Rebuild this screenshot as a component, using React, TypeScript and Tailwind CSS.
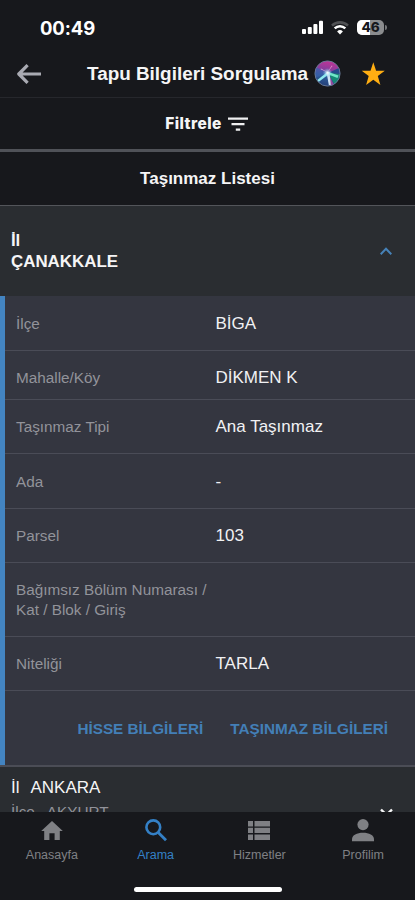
import type { ReactNode } from 'react'

interface DetailRow {
  label:  string
  value:  string
  height: string
}

const rows: DetailRow[] = [
  { label: 'İlçe',         value: 'BİGA',         height: 'h-[55px] pt-px' },
  { label: 'Mahalle/Köy',  value: 'DİKMEN K',     height: 'h-[49px] pt-[6px]' },
  { label: 'Taşınmaz Tipi', value: 'Ana Taşınmaz', height: 'h-[54px] pt-px' },
  { label: 'Ada',          value: '-',            height: 'h-[55px] pt-px' },
  { label: 'Parsel',       value: '103',          height: 'h-[54px] pt-px' },
  { label: 'Bağımsız Bölüm Numarası / Kat / Blok / Giriş', value: '', height: 'h-[74px]' },
  { label: 'Niteliği',     value: 'TARLA',        height: 'h-[54px]' },
]

function StatusBar() {
  return (
    <div className="h-[50px] shrink-0 flex items-start justify-between pl-10 pr-[28px] pt-[16px]">
      <span className="font-['Inter',sans-serif] font-bold text-[18.5px] leading-6 tracking-[-0.1px] text-white">00:49</span>
      <div className="flex items-center mt-[4px]">
        <svg width="22" height="15" viewBox="0 0 22 15" fill="#fff">
          <rect x="0" y="9" width="4" height="5" rx="1" />
          <rect x="5.8" y="7" width="4" height="7" rx="1" />
          <rect x="11.4" y="4" width="4" height="10" rx="1" />
          <rect x="17" y="0.8" width="4" height="13.2" rx="1" />
        </svg>
        <svg className="ml-[7px]" width="18" height="14" viewBox="0 0 18 14" fill="none">
          <path d="M1 4.6a11.5 11.5 0 0 1 16 0" stroke="#505154" strokeWidth="2.6" />
          <path d="M3.7 7.4a7.6 7.6 0 0 1 10.6 0" stroke="#fff" strokeWidth="2.5" />
          <path d="M9 13.6 6.1 10.5a4.1 4.1 0 0 1 5.8 0Z" fill="#fff" />
        </svg>
        <div className="relative ml-[8px] w-[27px] h-[15px] rounded-[5px] overflow-hidden bg-[#8b8c8e] flex items-center justify-center">
          <div className="absolute inset-y-0 left-0 w-[13px] bg-white" />
          <span className="relative font-['Inter',sans-serif] font-extrabold text-[13.5px] leading-none text-[#17181c]">46</span>
        </div>
        <div className="ml-px w-[2px] h-[5px] rounded-r-full bg-[#77787a]" />
      </div>
    </div>
  )
}

function AssistantOrb() {
  return (
    <svg width="27" height="27" viewBox="0 0 27 27">
      <defs>
        <linearGradient id="orb" x1="0.6" y1="0" x2="0.4" y2="1">
          <stop offset="0" stopColor="#c23496" />
          <stop offset="0.35" stopColor="#8a3c9c" />
          <stop offset="0.6" stopColor="#2f5f9c" />
          <stop offset="1" stopColor="#233f78" />
        </linearGradient>
        <radialGradient id="glow">
          <stop offset="0" stopColor="#fff" />
          <stop offset="0.3" stopColor="#d3eefa" stopOpacity="0.7" />
          <stop offset="1" stopColor="#63c8e8" stopOpacity="0" />
        </radialGradient>
        <clipPath id="orbClip"><circle cx="13.5" cy="13.5" r="12.3" /></clipPath>
      </defs>
      <circle cx="13.5" cy="13.5" r="12.5" fill="url(#orb)" />
      <g clipPath="url(#orbClip)">
        <path d="M13.5 13 0 6v12Z" fill="#3a5fae" opacity="0.7" />
        <path d="M14 13 27 12v9l-6 4Z" fill="#12906f" opacity="0.85" />
        <path d="M14 13 26 7.5 27 14Z" fill="#264a8c" />
        <path d="M14 13 17 27h4Z" fill="#a14a9d" opacity="0.9" />
        <path d="M14 11.5 3 20.3l1.6 1.6L15 14Z" fill="#8feaf0" />
        <path d="M13 11.5 24.5 15.5l-1 2.5L13 14Z" fill="#6fe6c8" />
        <path d="M12.5 12 14.8 25h2L15.5 12Z" fill="#cfe3f5" />
        <path d="M14 12.5 7 8.5l-.4.8Z" fill="#d9aee5" />
        <path d="M13 13 18.5 6l-.8-.5Z" fill="#e58bc4" />
      </g>
      <circle cx="13.5" cy="12.8" r="4.8" fill="url(#glow)" />
      <circle cx="13.5" cy="13.5" r="12.6" fill="none" stroke="#6d80a0" strokeWidth="0.9" />
    </svg>
  )
}

function Header() {
  return (
    <div className="h-[48px] shrink-0 flex items-center border-b border-[#26272c]">
      <svg className="ml-[17px] shrink-0" width="24" height="20" viewBox="0 0 24 20" fill="none" stroke="#a9aab2" strokeWidth="3.2" strokeLinejoin="round">
        <path d="M10.6 1.2 1.8 10l8.8 8.8M2 10h22" />
      </svg>
      <h1 className="ml-[46px] w-[221px] shrink-0 whitespace-nowrap text-[18.9px] leading-6 font-bold text-[#f5f5f6]">
        Tapu Bilgileri Sorgulama
      </h1>
      <div className="ml-[6px] shrink-0"><AssistantOrb /></div>
      <svg className="ml-[20px] shrink-0" width="25" height="24" viewBox="0 0 25 24" fill="#ffae12">
        <path d="m12.3.3 2.8 8.4h8.7l-7 5.3 2.6 9-7.1-5.3L5.1 23l2.6-9-7-5.3h8.8Z" />
      </svg>
    </div>
  )
}

function Row({ label, value, height }: DetailRow) {
  return (
    <div className={`${height} flex items-center border-b border-[#4a4c57]`}>
      <span className="ml-[11px] w-[199.5px] shrink-0 text-[15.3px] leading-5 text-[#92939a]">{label}</span>
      <span className="text-[17px] leading-5 text-[#f1f1f3]">{value}</span>
    </div>
  )
}

function NavItem({ label, active, children }: { label: string; active?: boolean; children: ReactNode }) {
  return (
    <div className={`flex flex-col items-center ${active ? 'text-[#3480c6]' : 'text-[#7f8084]'}`}>
      <svg width="24" height="24" viewBox="0 0 24 24" fill="currentColor">{children}</svg>
      <span className="mt-[4px] text-[12.5px] leading-4">{label}</span>
    </div>
  )
}

export default function App() {
  return (
    <div className="w-[415px] h-[900px] overflow-hidden flex flex-col bg-[#17181c] font-['Liberation_Sans',Arial,sans-serif]">
      <StatusBar />
      <Header />

      {/* Filter */}
      <div className="h-[54px] shrink-0 flex items-center justify-center gap-[6px] pr-[2px] pt-px border-b-[3px] border-[#505258]">
        <span className="font-['Inter',sans-serif] text-[15.5px] leading-5 tracking-[0.4px] font-extrabold text-[#f5f5f6]">Filtrele</span>
        <svg width="20" height="14" viewBox="0 0 20 14" fill="#f0f0f1">
          <path d="M0 .5h20v2.3H0zM3.5 6h13v2.3h-13zM7.8 11.5h4.4v2.3H7.8z" />
        </svg>
      </div>

      <div className="h-[54px] shrink-0 flex items-center justify-center border-b border-[#53555a]">
        <h2 className="text-[17px] leading-5 font-bold text-[#f5f5f6]">Taşınmaz Listesi</h2>
      </div>

      {/* Expanded property */}
      <div className="h-[90px] shrink-0 flex items-center justify-between pl-[11px] pr-[23px] bg-[#2a2d31]">
        <div className="text-[16.9px] leading-[21px] font-bold text-[#f5f5f6]">
          <div className="tracking-[-0.3px]">İl</div>
          <div>ÇANAKKALE</div>
        </div>
        <svg width="12" height="8" viewBox="0 0 12 8" fill="none" stroke="#4682b8" strokeWidth="2">
          <path d="m.7 7.2 5.3-5.5 5.3 5.5" />
        </svg>
      </div>

      <div className="h-[471px] shrink-0 flex flex-col border-b-2 border-[#4b4d56] bg-[#343640]">
        <div className="flex-1 border-l-[5px] border-[#4384c1]">
          {rows.map(r => <Row key={r.label} {...r} />)}
          <div className="h-[74px] pt-px flex items-center justify-end gap-[27px] pr-[27px] text-[15.3px] leading-5 font-bold text-[#437fb7]">
            <button>HİSSE BİLGİLERİ</button>
            <button>TAŞINMAZ BİLGİLERİ</button>
          </div>
        </div>
      </div>

      {/* Next property, cut off by the tab bar */}
      <div className="h-[45px] shrink-0 overflow-hidden flex justify-between pl-[11px] pr-[22px] pt-[10px] bg-[#2a2d31]">
        <div>
          <div className="flex gap-[11px] text-[17px] leading-[21px] text-[#f5f5f6]"><span>İl</span><span>ANKARA</span></div>
          <div className="mt-[3px] flex gap-[12px] text-[15.3px] leading-[21px] text-[#92939a]"><span>İlçe</span><span>AKYURT</span></div>
        </div>
        <svg className="mt-[31px] shrink-0" width="13" height="9" viewBox="0 0 13 9" fill="none" stroke="#f5f5f6" strokeWidth="2.4">
          <path d="m1 1.5 5.5 5.5L12 1.5" />
        </svg>
      </div>

      {/* Tab bar */}
      <div className="flex-1 flex flex-col justify-between items-center pt-[7px] pb-[8px]">
        <div className="w-full grid grid-cols-4">
          <NavItem label="Anasayfa">
            <path d="M12 2 1.2 12h3v9h5.2v-6.7h5.2V21h5.2v-9h3Z" />
          </NavItem>
          <NavItem label="Arama" active>
            <circle cx="9.3" cy="8.3" r="6.9" fill="none" stroke="currentColor" strokeWidth="2.6" />
            <path d="m14 13 1.5-.2 7.5 7.5-2 2-7.5-7.5Z" />
          </NavItem>
          <NavItem label="Hizmetler">
            <path d="M1 2h5v5.4H1zM7.5 2H23v5.4H7.5zM1 8.7h5v5.4H1zM7.5 8.7H23v5.4H7.5zM1 15.4h5v5.5H1zM7.5 15.4H23v5.5H7.5z" />
          </NavItem>
          <NavItem label="Profilim">
            <circle cx="12" cy="5.6" r="5.6" />
            <path d="M1 22.2v-2c0-4 5-6.4 11-6.4s11 2.4 11 6.4v2Z" />
          </NavItem>
        </div>
        <div className="w-[148px] h-[5px] rounded-full bg-white" />
      </div>
    </div>
  )
}
